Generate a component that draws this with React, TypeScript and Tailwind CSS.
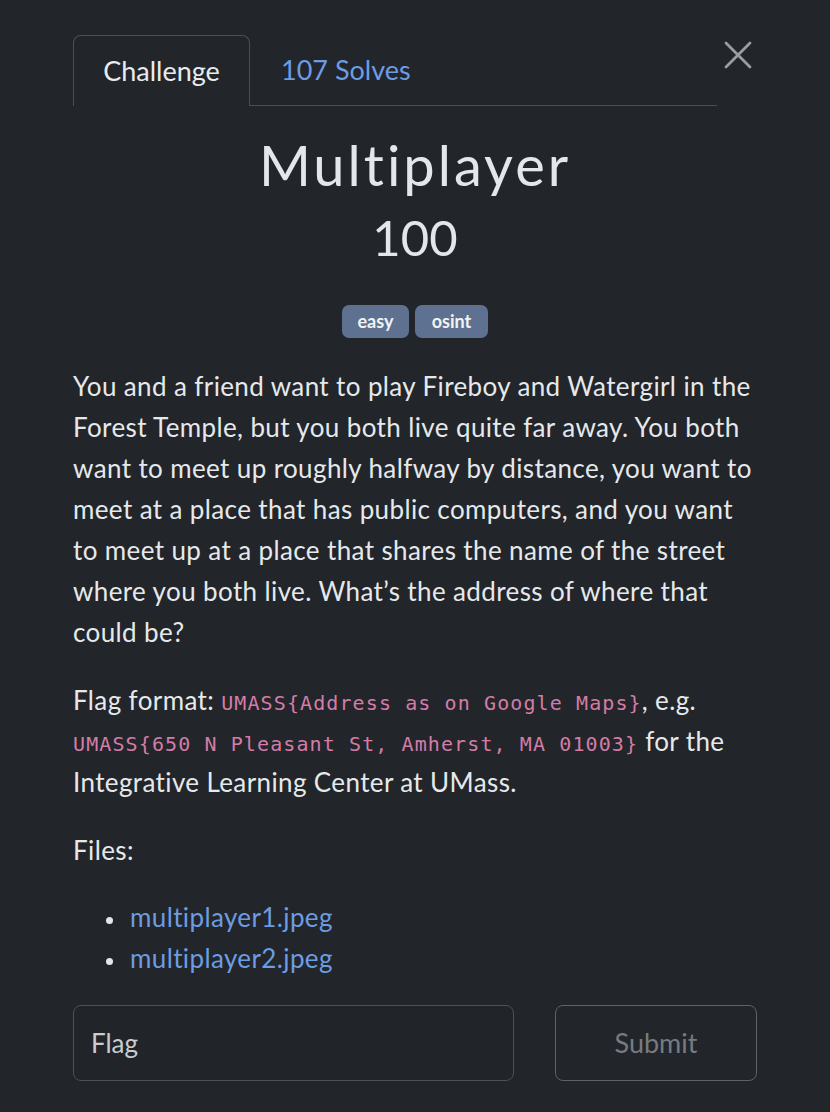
import React from "react";

const mono = { fontFamily: "'DejaVu Sans Mono', 'Liberation Mono', monospace" };

export default function App() {
  return (
    <div
      className="w-[830px] h-[1112px] bg-[#222529] text-[#dee2e6] overflow-hidden"
      style={{ fontFamily: "Lato, 'Noto Sans', sans-serif" }}
    >
      <div className="px-[73px] pt-[35px]">
        {/* Tabs row */}
        <div className="flex items-start">
          <div className="flex flex-1 border-b border-[#4b4f55] mr-[7px]">
            <div className="h-[71px] w-[177px] flex items-center justify-center border border-b-0 border-[#4b4f55] rounded-t-[8px] bg-[#222529] -mb-px text-[27px] text-[#e9ecef]">
              Challenge
            </div>
            <div className="h-[70px] pl-[31px] flex items-center text-[27px] text-[#6c9ce3]">
              107 Solves
            </div>
          </div>
          <button className="mt-[6px] w-[28px] h-[28px] flex items-center justify-center mr-[5px]">
            <svg width="28" height="28" viewBox="0 0 28 28">
              <path d="M2 2 L26 26 M26 2 L2 26" stroke="#9b9da0" strokeWidth="2.8" strokeLinecap="round" />
            </svg>
          </button>
        </div>

        {/* Title */}
        <div className="text-center">
          <h1 className="mt-[25px] text-[56px] leading-[67px] tracking-[3px] text-[#e3e6ea]">Multiplayer</h1>
          <div className="mt-[10px] text-[49px] leading-[58px] text-[#e3e6ea]">100</div>
          <div className="mt-[39px] flex justify-center gap-[6px]">
            <span className="h-[33px] w-[67px] flex items-center justify-center rounded-[7px] bg-[#5e7190] text-[18px] font-bold text-[#f1f3f5]">easy</span>
            <span className="h-[33px] w-[73px] flex items-center justify-center rounded-[7px] bg-[#5e7190] text-[18px] font-bold text-[#f1f3f5]">osint</span>
          </div>
        </div>

        {/* Description */}
        <div className="mt-[28px] text-[26px] leading-[41px] tracking-[0.38px] text-[#e6e9ec]">
          <p>
            You and a friend want to play Fireboy and Watergirl in the Forest Temple, but you both live quite far away. You both want to meet up roughly halfway by distance, you want to meet at a place that has public computers, and you want to meet up at a place that shares the name of the street where you both live. What’s the address of where that could be?
          </p>
          <p className="mt-[27px]">
            Flag format:{" "}
            <code className="text-[#d47ca8] text-[20px] leading-none tracking-[1.1px]" style={mono}>
              UMASS{"{"}Address as on Google Maps{"}"}
            </code>
            , e.g.{" "}
            <code className="text-[#d47ca8] text-[20px] leading-none tracking-[1.1px]" style={mono}>
              UMASS{"{"}650 N Pleasant St, Amherst, MA 01003{"}"}
            </code>{" "}
            for the Integrative Learning Center at UMass.
          </p>
          <p className="mt-[27px]">Files:</p>
          <ul className="mt-[26px] list-disc pl-[53px] marker:text-[#e3e6ea] marker:text-[20px]">
            <li className="text-[#6c9ce3] pl-[4px]">multiplayer1.jpeg</li>
            <li className="text-[#6c9ce3] pl-[4px]">multiplayer2.jpeg</li>
          </ul>
        </div>

        {/* Form */}
        <div className="mt-[26px] flex items-center gap-[41px]">
          <div className="flex-1 h-[76px] rounded-[8px] border border-[#4d5157] bg-[#212428] flex items-center px-[17px] text-[26px] text-[#c9cdd2]">
            Flag
          </div>
          <button className="w-[202px] h-[76px] rounded-[8px] border border-[#5f6369] flex items-center justify-center text-[27px] text-[#777b81]">
            Submit
          </button>
        </div>
      </div>
    </div>
  );
}
